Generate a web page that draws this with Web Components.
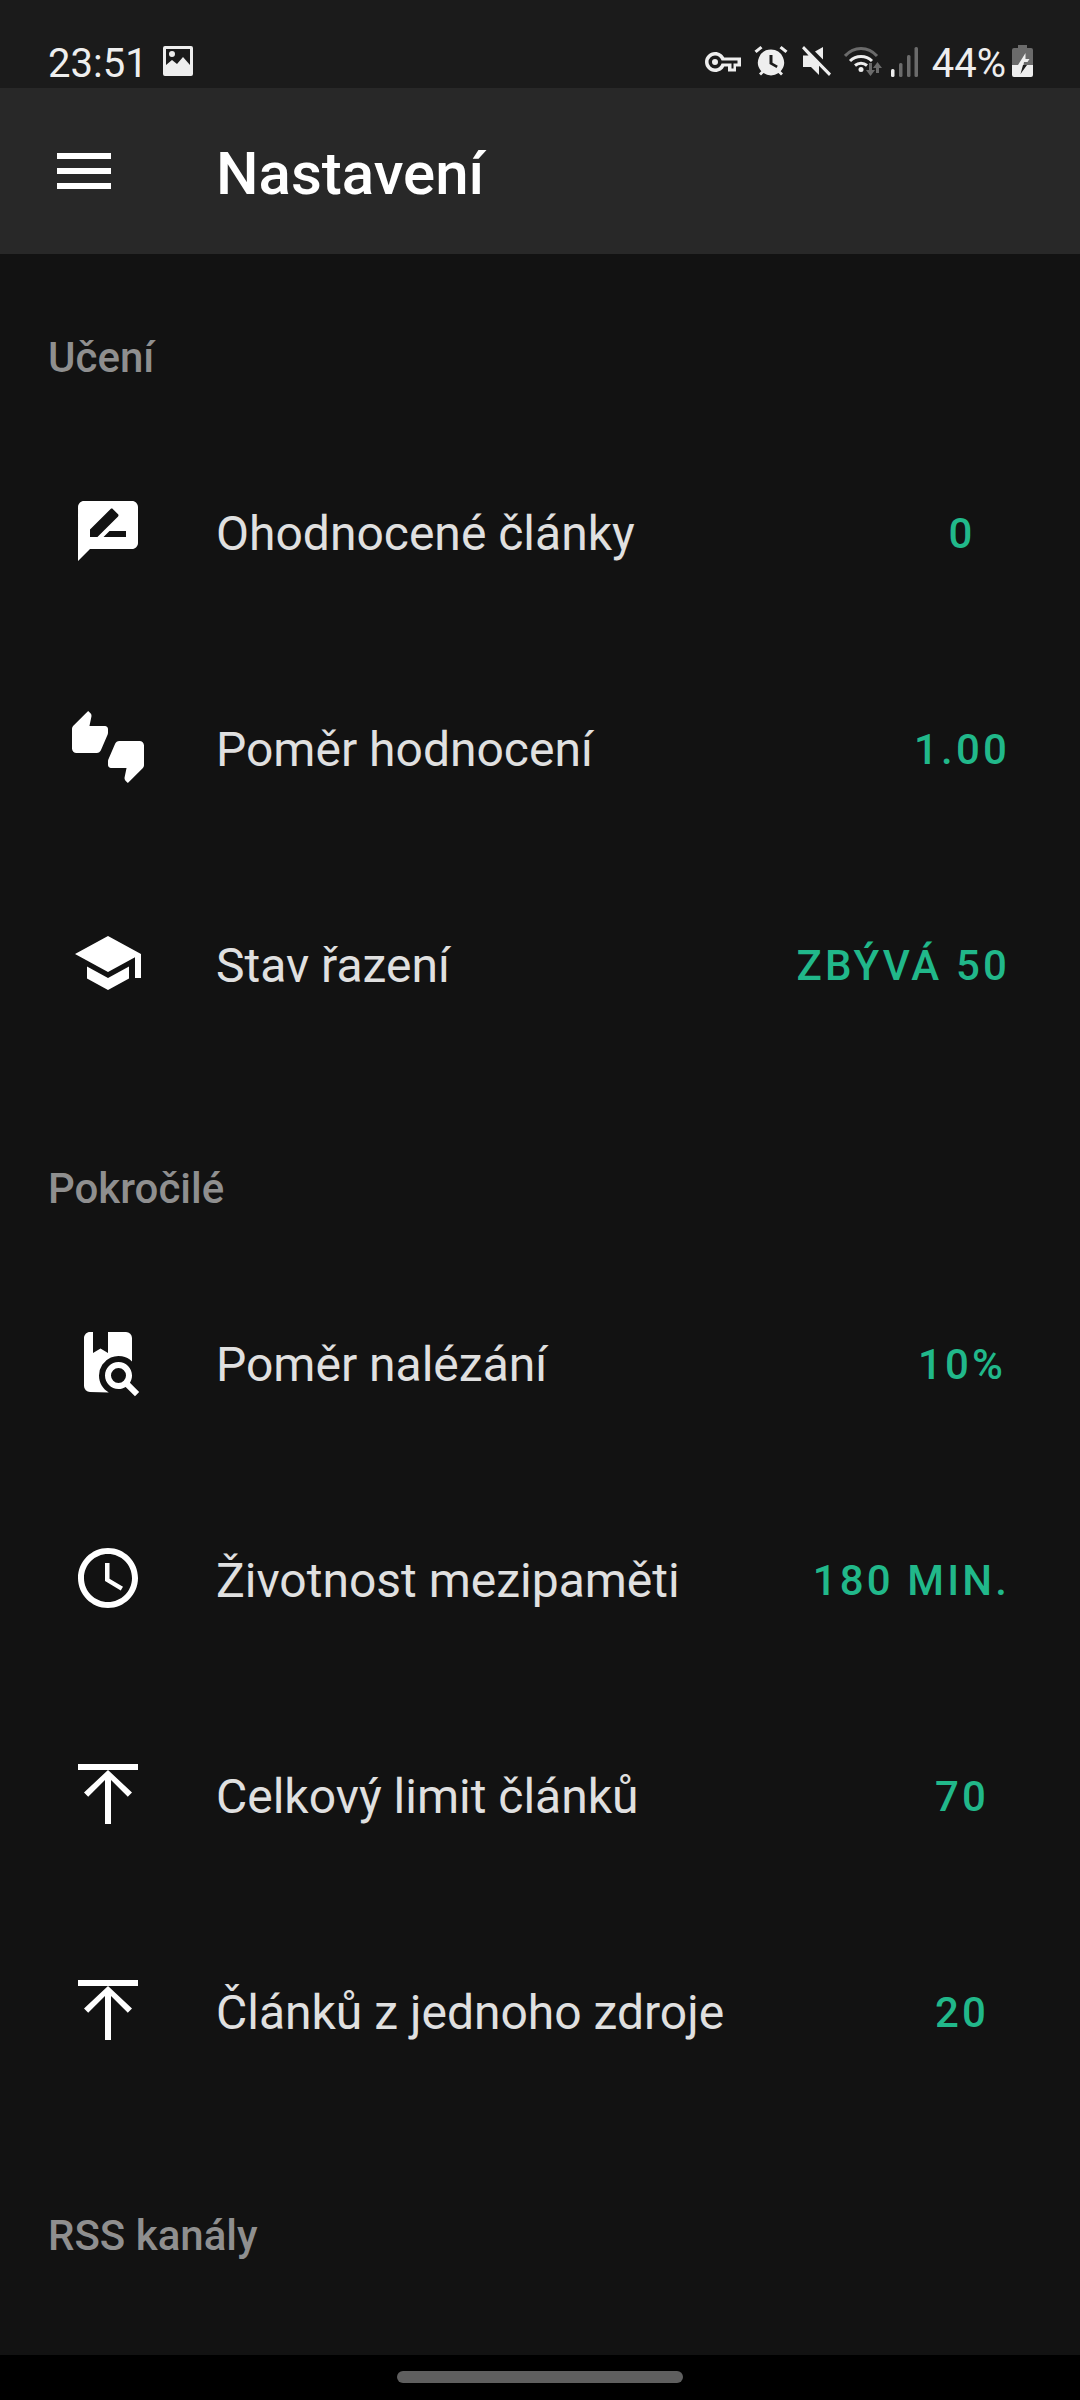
<!DOCTYPE html>
<html lang="cs">
<head>
<meta charset="utf-8">
<title>Nastavení</title>
<style>
  html, body { margin: 0; background: #121212; }
  body { font-family: Roboto, "Noto Sans", sans-serif; }
</style>
</head>
<body>
<app-shell>
  <status-bar slot="status"></status-bar>
  <app-toolbar slot="toolbar" title-name="Nastavení"></app-toolbar>
  <settings-section title-name="Učení" first>
    <settings-row icon="rate" label="Ohodnocené články" value="0"></settings-row>
    <settings-row icon="thumbs" label="Poměr hodnocení" value="1.00"></settings-row>
    <settings-row icon="school" label="Stav řazení" value="ZBÝVÁ 50"></settings-row>
  </settings-section>
  <settings-section title-name="Pokročilé">
    <settings-row icon="book" label="Poměr nalézání" value="10%"></settings-row>
    <settings-row icon="clock" label="Životnost mezipaměti" value="180 MIN."></settings-row>
    <settings-row icon="top" label="Celkový limit článků" value="70"></settings-row>
    <settings-row icon="top" label="Článků z jednoho zdroje" value="20"></settings-row>
  </settings-section>
  <settings-section title-name="RSS kanály"></settings-section>
  <nav-bar slot="nav"></nav-bar>
</app-shell>
<script>
const ICONS = {
  menu: 'M3 18h18v-2H3v2zm0-5h18v-2H3v2zm0-7v2h18V6H3z',
  rate: 'M20 2H4c-1.1 0-1.99.9-1.99 2L2 22l4-4h14c1.1 0 2-.9 2-2V4c0-1.1-.9-2-2-2zM6 14v-2.47l6.88-6.88c.2-.2.51-.2.71 0l1.77 1.77c.2.2.2.51 0 .71L8.47 14H6zm12 0h-7.5l2-2H18v2z',
  thumbs: 'M12 6c0-.55-.45-1-1-1H5.82l.66-3.18.02-.23c0-.31-.13-.59-.33-.8L5.38 0 .44 4.94C.17 5.21 0 5.59 0 6v6.5c0 .83.67 1.5 1.5 1.5h6.75c.62 0 1.15-.38 1.38-.91l2.26-5.29c.07-.17.11-.36.11-.55V6zm10.5 4h-6.75c-.62 0-1.15.38-1.38.91l-2.26 5.29c-.07.17-.11.36-.11.55V18c0 .55.45 1 1 1h5.18l-.66 3.18-.02.24c0 .31.13.59.33.8l.79.78 4.94-4.94c.27-.27.44-.65.44-1.06v-6.5c0-.83-.67-1.5-1.5-1.5z',
  school: 'M5 13.18v4L12 21l7-3.82v-4L12 17l-7-3.82zM12 3L1 9l11 6 9-4.91V17h2V9L12 3z',
  book: 'M15.5 12c2.5 0 4.5 2 4.5 4.5 0 .88-.25 1.71-.69 2.4L22.39 22 21 23.39l-3.12-3.07c-.69.43-1.51.68-2.38.68-2.5 0-4.5-2-4.5-4.5s2-4.5 4.5-4.5zm0 2a2.5 2.5 0 1 0 0 5 2.5 2.5 0 0 0 0-5zM6 22a2 2 0 0 1-2-2V4c0-1.11.9-2 2-2h1v7l2.5-1.5L12 9V2h6a2 2 0 0 1 2 2v7.81A6.5 6.5 0 0 0 9 16.5c0 2.43 1.32 4.54 3.28 5.65L6 22z',
  clock: 'M11.99 2C6.47 2 2 6.48 2 12s4.47 10 9.99 10C17.52 22 22 17.52 22 12S17.52 2 11.99 2zM12 20c-4.42 0-8-3.58-8-8s3.58-8 8-8 8 3.58 8 8-3.58 8-8 8zm.5-13H11v6l5.25 3.15.75-1.23-4.5-2.67z',
  top: 'M2 2h20v2H2zM12 4l8 7.5-1.4 1.4L13 7.3V22h-2V7.3l-5.6 5.6L4 11.500z'
}

function icon (name, size) {
  return `<svg width="${size}" height="${size}" viewBox="0 0 24 24" fill="currentColor"><path d="${ICONS[name]}"/></svg>`
}

class AppShell extends HTMLElement {
  constructor () {
    super()
    this.attachShadow({ mode: 'open' })
    this.shadowRoot.innerHTML = /* html */`
      <style>
        :host { display: flex; flex-direction: column; height: 2400px; overflow: hidden; background: #121212; }
        main { flex: 1; min-height: 0; overflow: hidden; }
      </style>
      <slot name="status"></slot>
      <slot name="toolbar"></slot>
      <main><slot></slot></main>
      <slot name="nav"></slot>
    `
  }
}

class StatusBar extends HTMLElement {
  constructor () {
    super()
    this.attachShadow({ mode: 'open' })
    this.shadowRoot.innerHTML = /* html */`
      <style>
        :host { display: flex; align-items: flex-start; justify-content: space-between; height: 88px; box-sizing: border-box; padding: 0 47px 0 48px; background: #1b1b1b; color: #eeeeee; font: 400 40px/48px Roboto, sans-serif; }
        .side { display: flex; align-items: flex-start; padding-top: 38px; }
        svg { display: block; flex: none; }
        span { margin-top: 2px; }
        .img { margin: 8px 0 0 15px; }
        .key { margin-top: 14px; }
        .alarm { margin: 8px 0 0 13px; }
        .mute { margin: 8px 0 0 14px; }
        .wifi { margin: 7px 0 0 13px; }
        .signal { margin: 9px 0 0 7px; }
        .pct { margin-left: 14px; }
        .bat { margin: 7px 0 0 6px; }
      </style>
      <div class="side">
        <span class="time">23:51</span>
        <svg class="img" width="30" height="30" viewBox="0 0 30 30"><path fill="#eeeeee" fill-rule="evenodd" d="M2 0h26a2 2 0 0 1 2 2v26a2 2 0 0 1-2 2H2a2 2 0 0 1-2-2V2a2 2 0 0 1 2-2zM3 3v16l6-5 5 4 6-7 7 8V3zM9 5a3 3 0 1 1 0 6 3 3 0 0 1 0-6z"/></svg>
      </div>
      <div class="side">
        <svg class="key" width="36" height="20" viewBox="0 0 36 20"><path fill="#eeeeee" fill-rule="evenodd" d="M10 0c4.300 0 8 2.500 9.200 5.500H36v9h-5v5h-8v-5h-3.800C18 17.500 14.300 20 10 20 4.500 20 0 15.500 0 10S4.500 0 10 0zm0 3.500a6.500 6.500 0 1 0 0 13c3 0 5.600-1.900 6.600-5h9.900v5h2v-5h4v-3H16.600c-1-3.100-3.600-5-6.600-5zm0 3.500a3 3 0 1 1 0 6 3 3 0 0 1 0-6z"/></svg>
        <svg class="alarm" width="34" height="30" viewBox="0 0 33 30"><path fill="#eeeeee" fill-rule="evenodd" d="M16.500 3.500a13 13 0 0 1 9.700 21.700l2.300 2.300-2 2-2.500-2.500a13 13 0 0 1-15 0L6.500 29.500l-2-2 2.300-2.300A13 13 0 0 1 16.500 3.500zM15 9v9l7 4 1.300-2.200-5.300-3V9zM6 0l2 2.300L2 7 0 4.700zM27 0l6 4.700L31 7l-6-4.700z"/></svg>
        <svg class="mute" width="29" height="30" viewBox="0 0 29 30"><path fill="#eeeeee" d="M2 0l27 27.500-2 2.500L17 19.800V29L9 21H1V9.500h5.500L0 2.300zM21 1v12.500l-8-8z"/></svg>
        <svg class="wifi" width="40" height="31" viewBox="0 0 40 31"><path fill="none" stroke="#6b6b6b" stroke-width="3" d="M1 11C10 1 24 1 33 11"/><path fill="none" stroke="#eeeeee" stroke-width="3" d="M6 16c6-6 16-6 22 0M11 20.500c3.500-3 8.500-3 12 0"/><circle cx="17" cy="24.500" r="2.500" fill="#eeeeee"/><path fill="#6b6b6b" d="M25 18h3v7h3l-4.500 6-4.500-6h3zM35 28h-3v-5h-3l4.500-6 4.500 6h-3z"/></svg>
        <svg class="signal" width="27" height="30" viewBox="0 0 27 30"><rect x="0" y="22" width="3.500" height="8" rx="1.500" fill="#eeeeee"/><rect x="8" y="16" width="3.500" height="14" rx="1.500" fill="#6b6b6b"/><rect x="16" y="8" width="3.500" height="22" rx="1.500" fill="#6b6b6b"/><rect x="23.500" y="0" width="3.500" height="30" rx="1.500" fill="#6b6b6b"/></svg>
        <span class="pct">44%</span>
        <svg class="bat" width="21" height="32" viewBox="0 0 21 32"><path fill="#6b6b6b" d="M6 0h9v3h4a2 2 0 0 1 2 2v15H0V5a2 2 0 0 1 2-2h4z"/><path fill="#eeeeee" d="M0 20h21v10a2 2 0 0 1-2 2H2a2 2 0 0 1-2-2zM13.500 8L6 20h5.500l.5-3h3.500l2-3h-4z"/><path fill="#1b1b1b" d="M6 20h5l-2.500 9L15 20z"/></svg>
      </div>
    `
  }
}

class AppToolbar extends HTMLElement {
  constructor () {
    super()
    this.attachShadow({ mode: 'open' })
    this.shadowRoot.innerHTML = /* html */`
      <style>
        :host { display: flex; align-items: center; height: 166px; padding-left: 48px; background: #282828; color: #ffffff; }
        svg { display: block; flex: none; margin-right: 96px; }
        h1 { margin: 6px 0 0; font: 500 60px/72px Roboto, sans-serif; }
      </style>
      ${icon('menu', 72)}
      <h1>${this.getAttribute('title-name')}</h1>
    `
  }
}

class SettingsSection extends HTMLElement {
  constructor () {
    super()
    this.attachShadow({ mode: 'open' })
    this.shadowRoot.innerHTML = /* html */`
      <style>
        :host { display: block; padding-top: 91px; }
        :host([first]) { padding-top: 77px; }
        h2 { margin: 3px 0 41px; padding-left: 48px; font: 500 42px/48px Roboto, sans-serif; color: #8f8f8f; }
      </style>
      <h2>${this.getAttribute('title-name')}</h2>
      <slot></slot>
    `
  }
}

class SettingsRow extends HTMLElement {
  constructor () {
    super()
    this.attachShadow({ mode: 'open' })
    this.shadowRoot.innerHTML = /* html */`
      <style>
        :host { display: flex; align-items: center; height: 216px; padding: 0 70px 0 72px; color: #ffffff; }
        svg { display: block; flex: none; margin-right: 72px; }
        .label { flex: 1; padding-top: 6px; font: 400 48px/64px Roboto, sans-serif; color: #e0e0e0; white-space: nowrap; }
        .value { min-width: 96px; padding-top: 6px; text-align: center; font: 500 42px/48px Roboto, sans-serif; letter-spacing: 3.15px; color: #21b88a; white-space: nowrap; }
      </style>
      ${icon(this.getAttribute('icon'), 72)}
      <span class="label">${this.getAttribute('label')}</span>
      <span class="value">${this.getAttribute('value')}</span>
    `
  }
}

class NavBar extends HTMLElement {
  constructor () {
    super()
    this.attachShadow({ mode: 'open' })
    this.shadowRoot.innerHTML = /* html */`
      <style>
        :host { display: flex; justify-content: center; height: 45px; box-sizing: border-box; padding-top: 16px; background: #000000; }
        div { width: 286px; height: 12px; border-radius: 6px; background: #5f5f5f; }
      </style>
      <div></div>
    `
  }
}

customElements.define('app-shell', AppShell)
customElements.define('status-bar', StatusBar)
customElements.define('app-toolbar', AppToolbar)
customElements.define('settings-section', SettingsSection)
customElements.define('settings-row', SettingsRow)
customElements.define('nav-bar', NavBar)
</script>
</body>
</html>
